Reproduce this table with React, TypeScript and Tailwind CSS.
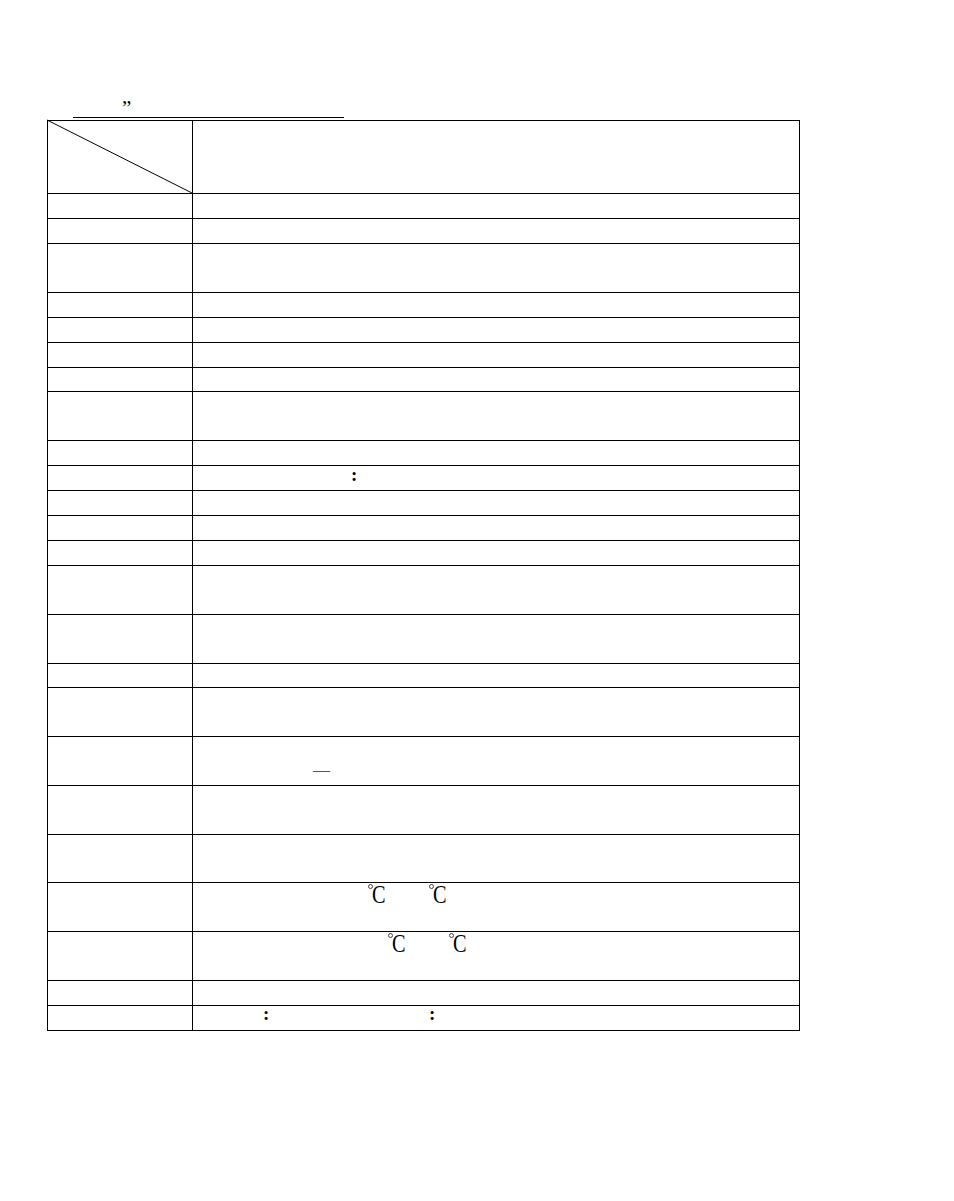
import React from "react";

const heights = [73, 25, 25, 49, 25, 25, 25, 24, 49, 25, 25, 25, 25, 25, 49, 49, 24, 49, 49, 49, 48, 49, 49, 25, 25];

function Celsius() {
  return (
    <span className="flex items-start w-[20px] h-[22px]">
      <span className="block w-[5px] h-[5px] shrink-0 rounded-full border border-[#444] mt-[1px]" />
      <span className="block text-[26px] leading-[18px] mt-[3px] -ml-[1px] scale-x-[0.78] origin-left" style={{ fontFamily: '"Liberation Serif", serif' }}>C</span>
    </span>
  );
}

function Content({ i }: { i: number }) {
  if (i === 10) {
    return <div className="pl-[158px] pt-[2px] text-[19px] font-bold leading-[14px]">:</div>;
  }
  if (i === 18) {
    return <div className="pl-[120px] pt-[26px] text-[17px] leading-[14px] text-[#555]">—</div>;
  }
  if (i === 21) {
    return (
      <div className="pl-[175px] flex items-start">
        <span className="flex w-[61px]"><Celsius /></span>
        <Celsius />
      </div>
    );
  }
  if (i === 22) {
    return (
      <div className="pl-[195px] flex items-start">
        <span className="flex w-[61px]"><Celsius /></span>
        <Celsius />
      </div>
    );
  }
  if (i === 24) {
    return (
      <div className="pl-[70px] pt-[1px] flex text-[19px] font-bold leading-[14px]">
        <span className="w-[166px]">:</span>
        <span>:</span>
      </div>
    );
  }
  return null;
}

export default function App() {
  return (
    <div className="w-[954px] min-h-[1201px] bg-white text-black" style={{ fontFamily: '"Liberation Serif", "Noto Sans CJK SC", serif' }}>
      <div className="pt-[92px]">
        <div className="ml-[73px] w-[271px] h-[26px] border-b border-black pl-[49px]">
          <span className="block text-[21px] leading-[20px] pt-[6px]">”</span>
        </div>
        <div className="ml-[47px] mt-[2px] w-[753px] border-t border-l border-r border-black">
          {heights.map((h, i) => (
            <div key={i} className="flex border-b border-black" style={{ height: h }}>
              <div className="relative w-[145px] shrink-0 border-r border-black">
                {i === 0 && (
                  <svg className="absolute inset-0 w-full h-full overflow-visible" viewBox="0 0 100 100" preserveAspectRatio="none">
                    <line x1="-0.7" y1="-1.4" x2="100" y2="100" stroke="#000" strokeWidth="1" vectorEffect="non-scaling-stroke" />
                  </svg>
                )}
              </div>
              <div className="flex-1">
                <Content i={i} />
              </div>
            </div>
          ))}
        </div>
      </div>
    </div>
  );
}
